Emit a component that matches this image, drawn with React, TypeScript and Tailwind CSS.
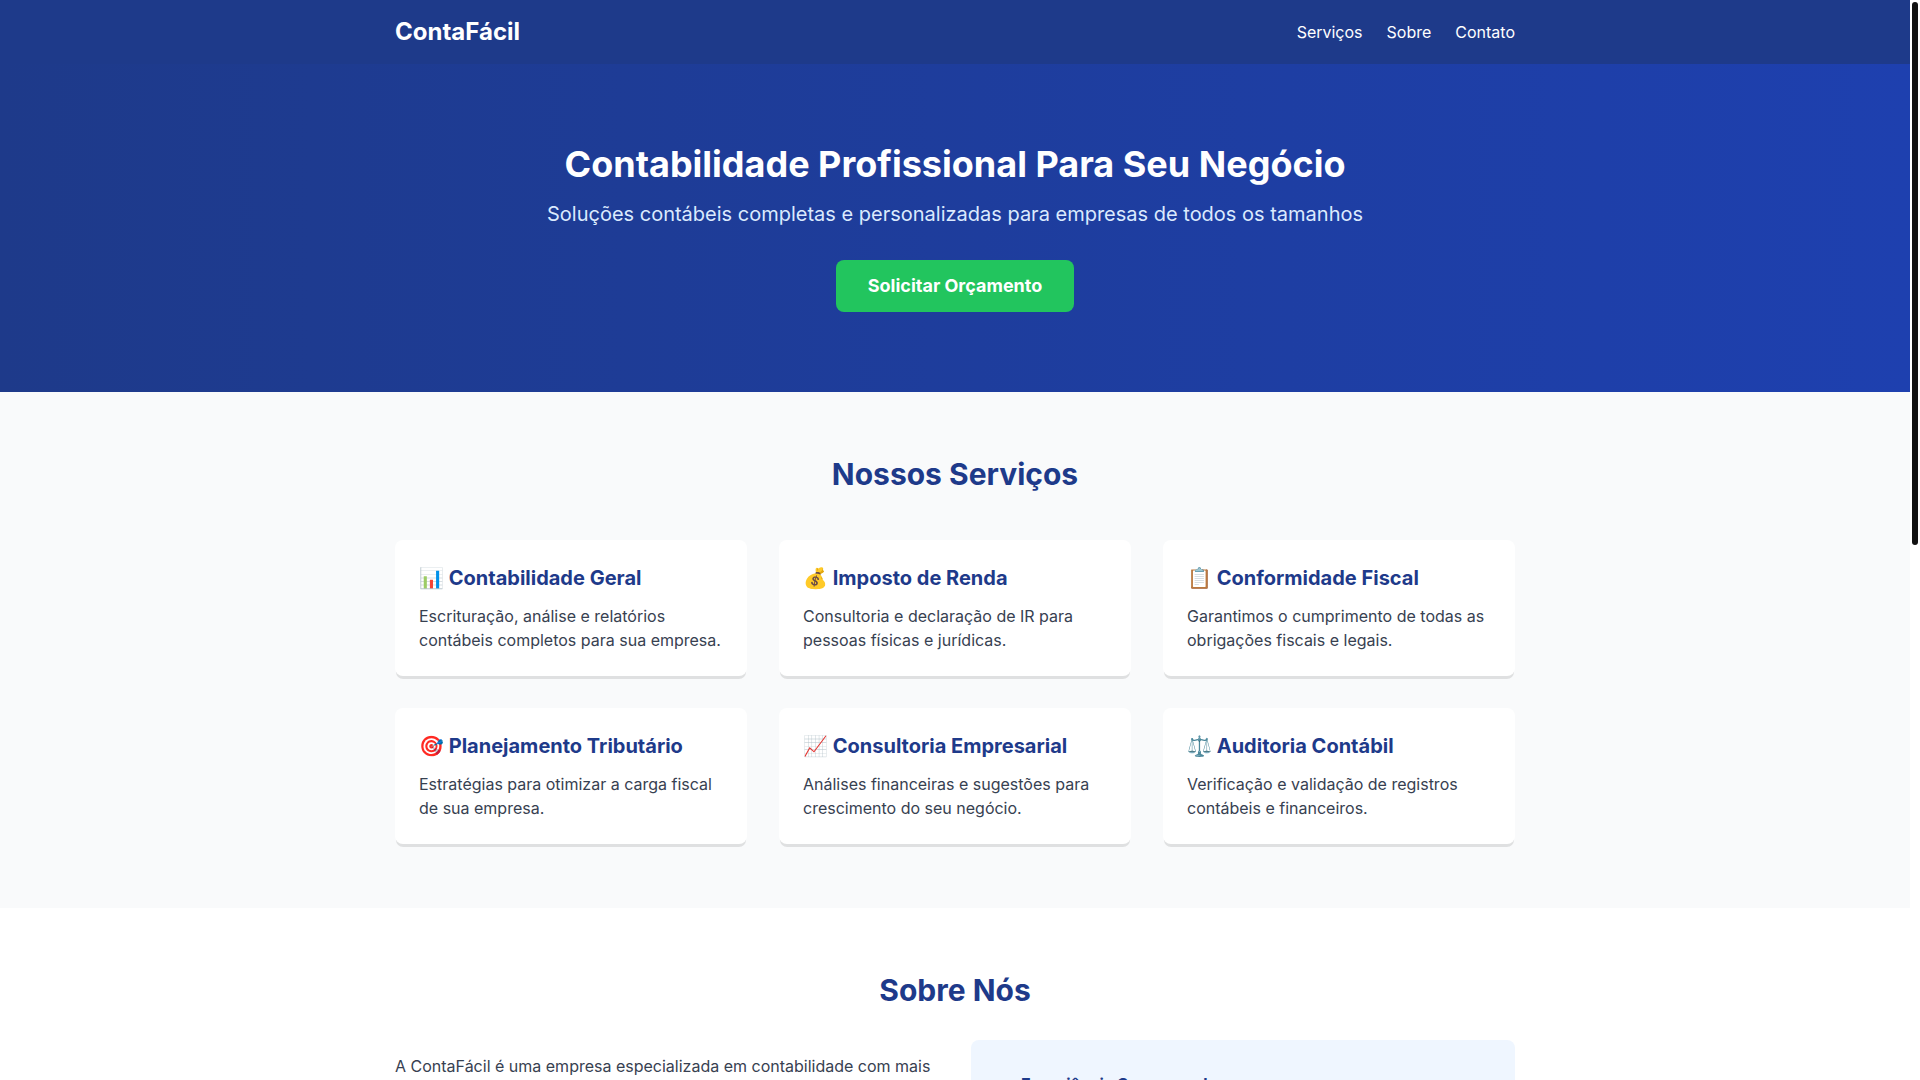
const links = [
  { label: "Serviços", href: "#servicos" },
  { label: "Sobre", href: "#sobre" },
  { label: "Contato", href: "#contato" },
];

const services = [
  {
    title: "📊 Contabilidade Geral",
    text: "Escrituração, análise e relatórios contábeis completos para sua empresa.",
  },
  {
    title: "💰 Imposto de Renda",
    text: "Consultoria e declaração de IR para pessoas físicas e jurídicas.",
  },
  {
    title: "📋 Conformidade Fiscal",
    text: "Garantimos o cumprimento de todas as obrigações fiscais e legais.",
  },
  {
    title: "🎯 Planejamento Tributário",
    text: "Estratégias para otimizar a carga fiscal de sua empresa.",
  },
  {
    title: "📈 Consultoria Empresarial",
    text: "Análises financeiras e sugestões para crescimento do seu negócio.",
  },
  {
    title: "⚖️ Auditoria Contábil",
    text: "Verificação e validação de registros contábeis e financeiros.",
  },
];

function Header() {
  return (
    <header className="bg-[#1e3a8a] text-white">
      <div className="max-w-6xl mx-auto p-4 flex items-center justify-between">
        <div className="text-2xl font-bold">ContaFácil</div>
        <nav className="flex gap-6">
          {links.map((link) => (
            <a key={link.href} href={link.href} className="hover:text-blue-200">
              {link.label}
            </a>
          ))}
        </nav>
      </div>
    </header>
  );
}

function Hero() {
  return (
    <section className="bg-[linear-gradient(to_right,#1e3a8a,#1e40af)] text-white py-20">
      <div className="max-w-6xl mx-auto px-4 text-center">
        <h1 className="text-4xl font-bold mb-4">
          Contabilidade Profissional Para Seu Negócio
        </h1>
        <p className="text-xl mb-8 text-[#dbeafe]">
          Soluções contábeis completas e personalizadas para empresas de todos
          os tamanhos
        </p>
        <button className="block mx-auto bg-[#22c55e] text-lg font-bold px-8 py-3 rounded-lg">
          Solicitar Orçamento
        </button>
      </div>
    </section>
  );
}

function Services() {
  return (
    <section id="servicos" className="bg-[#f9fafb] py-16">
      <div className="max-w-6xl mx-auto px-4">
        <h2 className="text-3xl font-bold text-center text-[#1e3a8a] mb-12">
          Nossos Serviços
        </h2>
        <div className="grid md:grid-cols-3 gap-8">
          {services.map((item) => (
            <div
              key={item.title}
              className="bg-white p-6 rounded-lg shadow-[0_4px_0_-1px_rgba(0,0,0,0.1)]"
            >
              <h3 className="text-xl font-bold text-[#1e3a8a] mb-3">
                {item.title}
              </h3>
              <p className="text-[#374151]">{item.text}</p>
            </div>
          ))}
        </div>
      </div>
    </section>
  );
}

function About() {
  return (
    <section id="sobre" className="bg-white py-16">
      <div className="max-w-6xl mx-auto px-4">
        <h2 className="text-3xl font-bold text-center text-[#1e3a8a] mb-8">
          Sobre Nós
        </h2>
        <div className="grid md:grid-cols-2 gap-8">
          <p className="text-[#374151] py-[14px]">
            A ContaFácil é uma empresa especializada em contabilidade com mais
          </p>
          <div className="bg-[#eff6ff] p-8 rounded-lg">
            <h3 className="font-bold text-[#1e3a8a]">
              ✓ Experiência Comprovada
            </h3>
          </div>
        </div>
      </div>
    </section>
  );
}

export default function App() {
  return (
    <div className="h-screen flex overflow-hidden bg-white font-['Inter',sans-serif]">
      <main className="flex-1 min-w-0">
        <Header />
        <Hero />
        <Services />
        <About />
      </main>
      {/* scroll track */}
      <div className="w-[10px] shrink-0 p-[2px]">
        <div className="h-[543px] rounded-full bg-[#111111]"></div>
      </div>
    </div>
  );
}
